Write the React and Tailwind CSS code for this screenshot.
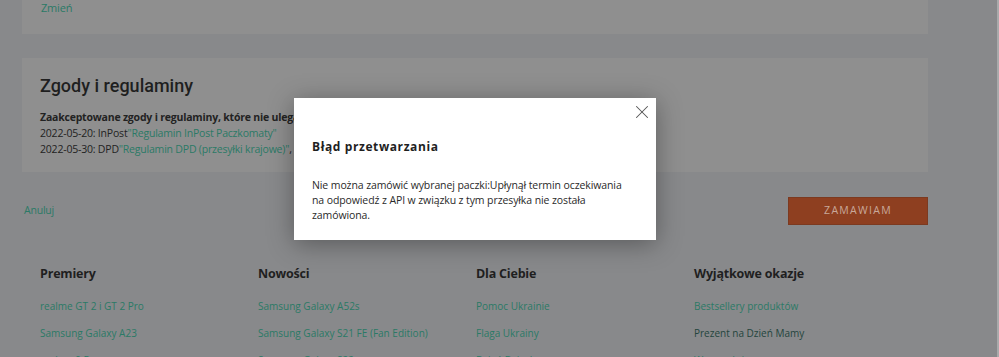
import { X } from "lucide-react";

const font = { fontFamily: '"Open Sans", "Noto Sans", sans-serif' };

const columns = [
  {
    title: "Premiery",
    links: [
      { label: "realme GT 2 i GT 2 Pro" },
      { label: "Samsung Galaxy A23" },
      { label: "realme 9 Pro+" },
    ],
  },
  {
    title: "Nowości",
    links: [
      { label: "Samsung Galaxy A52s" },
      { label: "Samsung Galaxy S21 FE (Fan Edition)" },
      { label: "Samsung Galaxy S22" },
    ],
  },
  {
    title: "Dla Ciebie",
    links: [
      { label: "Pomoc Ukrainie" },
      { label: "Flaga Ukrainy" },
      { label: "Dzień Dziecka" },
    ],
  },
  {
    title: "Wyjątkowe okazje",
    links: [
      { label: "Bestsellery produktów" },
      { label: "Prezent na Dzień Mamy", dark: true },
      { label: "Wyprzedaż" },
    ],
  },
];

export default function App() {
  return (
    <div
      className="relative h-[357px] w-[999px] overflow-hidden bg-[#88898b] tracking-[-0.2px] text-[#1f1f1f]"
      style={font}
    >
      <div className="ml-[22px] flex w-[906px] flex-col">
        {/* previous card */}
        <div className="h-[34px] bg-[#8f8f8f] px-[19px]">
          <span className="block text-[11px] leading-[16px] text-[#2b7a66]">Zmień</span>
        </div>

        {/* consents */}
        <div className="mt-[24px] bg-[#8f8f8f] px-[18px] pt-[14px] pb-[15px]">
          <h2
            className="text-[18px] font-medium leading-[28px] tracking-normal text-[#1f1f1f]"
            style={{ fontFamily: "Roboto, sans-serif" }}
          >
            Zgody i regulaminy
          </h2>
          <div className="mt-[9px] text-[10.5px] leading-[16px] text-[#222]">
            <p className="font-bold">
              Zaakceptowane zgody i regulaminy, które nie ulegają zmianie
            </p>
            <p>
              2022-05-20: InPost
              <span className="text-[#2b7a66]">"Regulamin InPost Paczkomaty"</span>
            </p>
            <p>
              2022-05-30: DPD
              <span className="text-[#2b7a66]">"Regulamin DPD (przesyłki krajowe)"</span>, DPD
            </p>
          </div>
        </div>

        {/* actions */}
        <div className="mt-[25px] flex items-center justify-between">
          <span className="ml-[2px] text-[10.5px] text-[#2b7a66]">Anuluj</span>
          <button className="h-[28px] w-[140px] border border-[#7c3a20] bg-[#8e3f20] text-[10.5px] tracking-[1.3px] text-[#c9a89a]">
            ZAMAWIAM
          </button>
        </div>

        {/* footer */}
        <div className="mt-[39px] grid grid-cols-[218px_218px_218px_218px] px-[18px]">
          {columns.map((c) => (
            <div key={c.title}>
              <h3 className="text-[12.5px] font-bold leading-[20px] text-[#1f1f1f]">{c.title}</h3>
              <ul className="mt-[12px] flex flex-col gap-[7px]">
                {c.links.map((l) => (
                  <li
                    key={l.label}
                    className={
                      "text-[10px] leading-[20px] tracking-normal " +
                      (l.dark ? "text-[#24453d]" : "text-[#2b7a66]")
                    }
                  >
                    {l.label}
                  </li>
                ))}
              </ul>
            </div>
          ))}
        </div>
      </div>

      {/* scrollbar edge */}
      <div className="absolute top-0 right-0 h-full w-[2px] bg-[#a9aaab]" />

      {/* modal */}
      <div className="absolute top-[98px] left-[294px] w-[362px] bg-white px-[18px] pt-[41px] pb-[17px] shadow-[0_4px_24px_rgba(0,0,0,0.35)]">
        <span className="absolute top-[3px] left-[337px] flex h-[22px] w-[22px] items-center justify-center text-[#555]">
          <X size={22} strokeWidth={1.1} />
        </span>
        <p className="text-[12px] font-bold leading-[16px] tracking-[0.6px] text-[#1f1f1f]">
          Błąd przetwarzania
        </p>
        <p className="mt-[23px] max-w-[316px] text-[10.5px] leading-[15px] tracking-[-0.1px] text-[#2a2a2a]">
          Nie można zamówić wybranej paczki:Upłynął termin oczekiwania na odpowiedź z API w
          związku z tym przesyłka nie została zamówiona.
        </p>
      </div>
    </div>
  );
}
